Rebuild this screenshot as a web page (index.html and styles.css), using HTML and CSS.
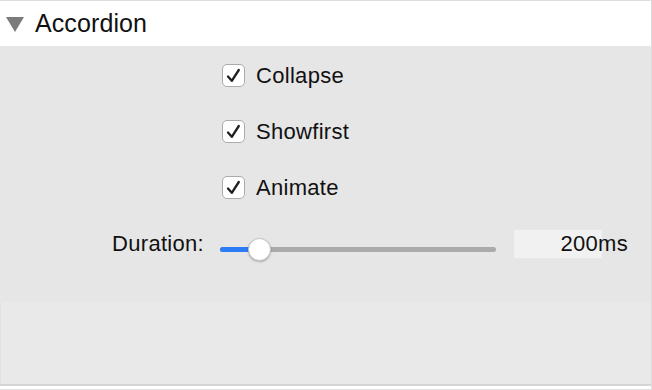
FILE: index.html
```html
<!DOCTYPE html>
<html>
<head>
<meta charset="utf-8">
<link rel="stylesheet" href="styles.css">
</head>
<body>
<div class="panel">
  <div class="header">
    <svg class="caret" width="18" height="15" viewBox="0 0 18 15"><polygon points="0,0 18,0 9,15" fill="#7b7b7b"/></svg>
    <span class="title">Accordion</span>
  </div>
  <div class="content">
    <div class="form">
      <div class="spacer"></div>
      <label class="check"><span class="box"><svg width="23" height="23" viewBox="0 0 23 23"><path d="M6 12.5 L9.8 16.8 L16.8 6" fill="none" stroke="#1e1e1e" stroke-width="2.3" stroke-linecap="round" stroke-linejoin="round"/></svg></span>Collapse</label>
      <div class="spacer"></div>
      <label class="check"><span class="box"><svg width="23" height="23" viewBox="0 0 23 23"><path d="M6 12.5 L9.8 16.8 L16.8 6" fill="none" stroke="#1e1e1e" stroke-width="2.3" stroke-linecap="round" stroke-linejoin="round"/></svg></span>Showfirst</label>
      <div class="spacer"></div>
      <label class="check"><span class="box"><svg width="23" height="23" viewBox="0 0 23 23"><path d="M6 12.5 L9.8 16.8 L16.8 6" fill="none" stroke="#1e1e1e" stroke-width="2.3" stroke-linecap="round" stroke-linejoin="round"/></svg></span>Animate</label>
      <div class="label">Duration:</div>
      <div class="slider-row">
        <div class="slider">
          <div class="fill"></div>
          <div class="thumb"></div>
        </div>
        <div class="value"><span>200ms</span></div>
      </div>
    </div>
  </div>
  <div class="footer"></div>
  <div class="bottom"></div>
</div>
</body>
</html>
```
FILE: styles.css
```css
html, body {
  margin: 0;
  padding: 0;
  background: #e6e6e6;
}
body {
  width: 652px;
  height: 390px;
  overflow: hidden;
  font-family: "Liberation Sans", Arial, sans-serif;
  color: #111;
}
.panel {
  width: 652px;
  height: 390px;
  box-sizing: border-box;
  border-top: 1px solid #dedede;
  border-right: 1px solid #dcdcdc;
  display: flex;
  flex-direction: column;
  background: #e6e6e6;
}
.header {
  height: 45px;
  background: #fff;
  display: flex;
  align-items: center;
  padding-left: 6px;
  box-sizing: border-box;
}
.caret {
  margin-top: 2px;
  flex: none;
}
.title {
  margin-left: 11px;
  font-size: 25px;
  letter-spacing: 0.1px;
  color: #111;
}
.content {
  height: 256px;
  padding-top: 18px;
  box-sizing: border-box;
}
.form {
  display: grid;
  grid-template-columns: 204px 1fr;
  column-gap: 17px;
  row-gap: 33px;
  align-items: center;
}
.spacer {
  height: 23px;
}
.label {
  text-align: right;
  font-size: 22px;
  letter-spacing: 0.3px;
  height: 28px;
  line-height: 28px;
  margin-top: -2px;
}
.check {
  display: flex;
  align-items: center;
  height: 23px;
  font-size: 22px;
  letter-spacing: 0.3px;
  margin-left: 1px;
}
.box {
  width: 23px;
  height: 23px;
  box-sizing: border-box;
  border: 1px solid #ababab;
  border-radius: 5px;
  background: #fff;
  margin-right: 11px;
  position: relative;
  flex: none;
}
.box svg {
  position: absolute;
  left: -1px;
  top: -1px;
}
.slider-row {
  display: flex;
  align-items: flex-start;
  height: 28px;
  margin-left: -1px;
  margin-top: -2px;
}
.slider {
  position: relative;
  width: 276px;
  height: 5px;
  margin-top: 17px;
  border-radius: 3px;
  background: #ababab;
}
.fill {
  width: 36px;
  height: 5px;
  border-radius: 3px;
  background: #2d7cf6;
}
.thumb {
  position: absolute;
  left: 28px;
  top: -9px;
  width: 23px;
  height: 23px;
  box-sizing: border-box;
  border-radius: 50%;
  background: #fff;
  border: 1px solid #c4c4c4;
  box-shadow: 0 1px 2px rgba(0,0,0,0.25);
}
.value {
  margin-left: 18px;
  width: 88px;
  height: 28px;
  background: #f1f1f1;
  position: relative;
}
.value span {
  position: absolute;
  right: -26px;
  top: 2px;
  font-size: 22px;
  letter-spacing: 0.3px;
  line-height: 24px;
}
.footer {
  height: 82px;
  background: #e9e9e9;
  border-left: 1px solid #e2e2e2;
  box-sizing: border-box;
}
.bottom {
  height: 6px;
  border-top: 2px solid #d5d5d5;
  background: #fff;
  border-bottom: 1px solid #e0e0e0;
  box-sizing: border-box;
}
```
